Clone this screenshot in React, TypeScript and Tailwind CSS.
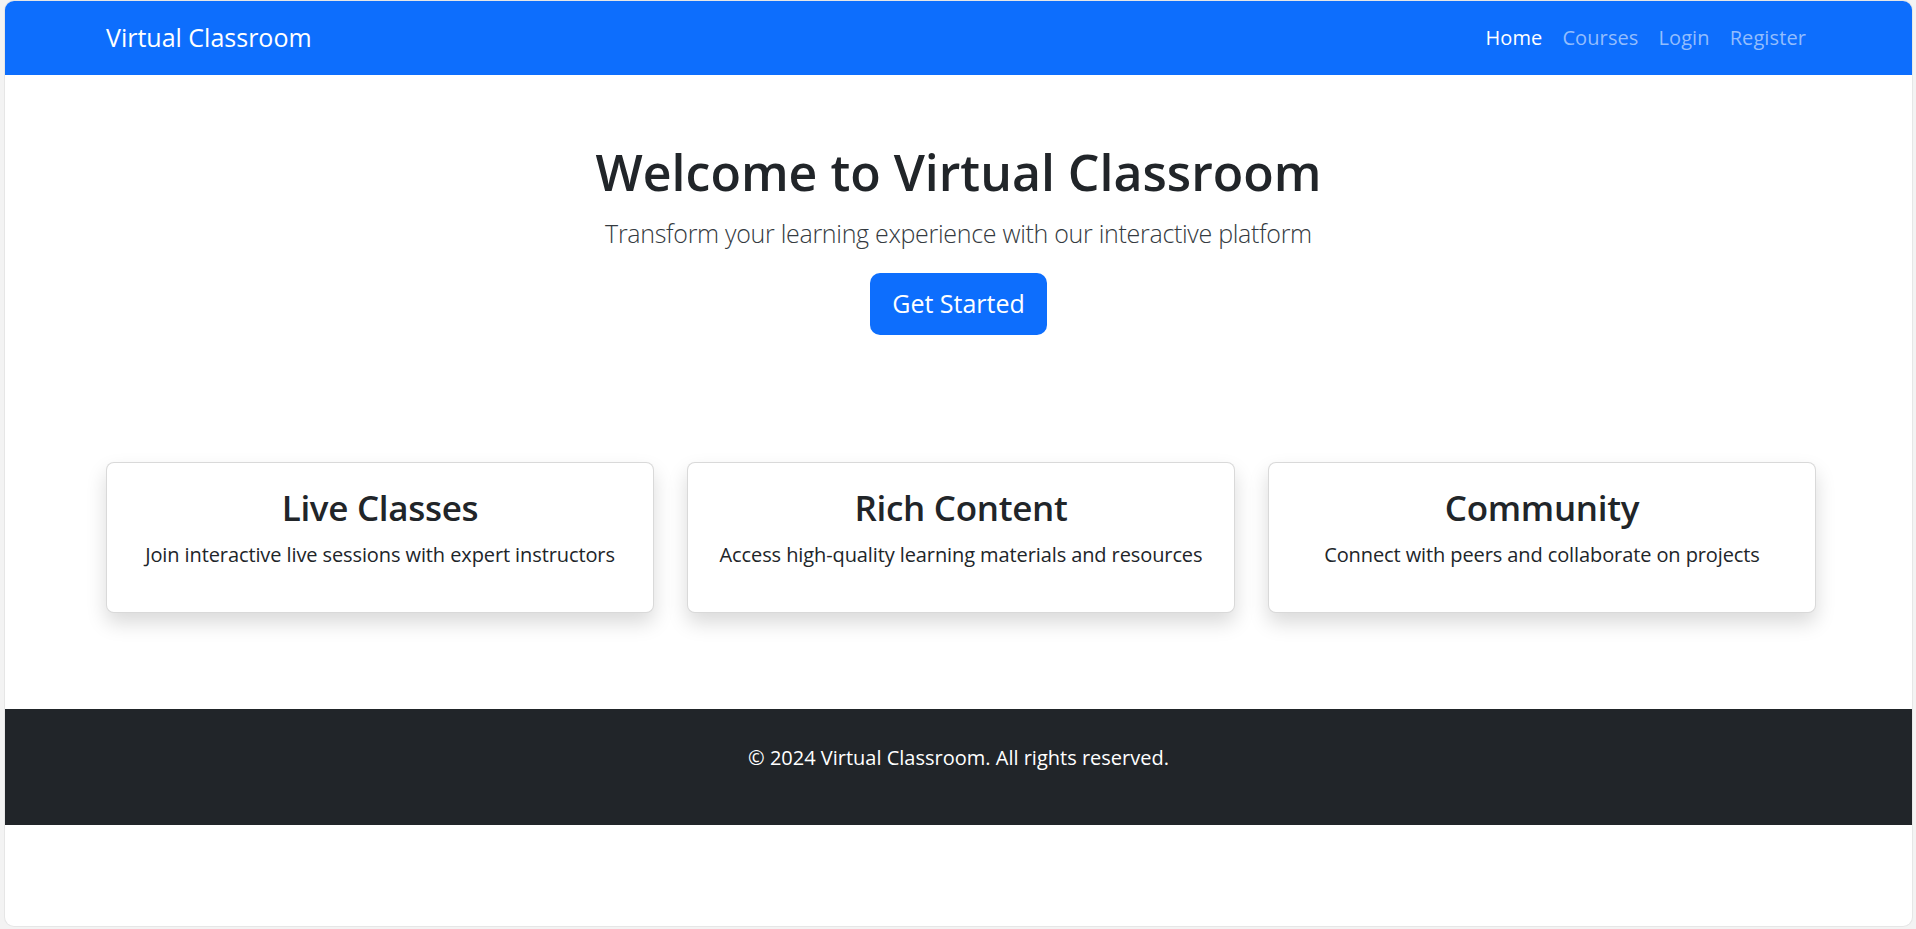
const links = [
  { label: "Home", active: true },
  { label: "Courses", active: false },
  { label: "Login", active: false },
  { label: "Register", active: false },
]

const features = [
  { title: "Live Classes", text: "Join interactive live sessions with expert instructors" },
  { title: "Rich Content", text: "Access high-quality learning materials and resources" },
  { title: "Community", text: "Connect with peers and collaborate on projects" },
]

export default function App() {
  return (
    <div className="h-[929px] bg-[#f3f3f3] pl-[5px] pr-[4px] pt-[1px] pb-[3px] font-['Open_Sans',sans-serif] text-[#212529]">
      <div className="flex h-full flex-col overflow-hidden rounded-[9px] bg-white shadow-[0_0_0_1px_#e6e6e6]">
        {/* Navbar */}
        <nav className="h-[74px] shrink-0 bg-[#0d6efd]">
          <div className="ml-[101px] flex h-full w-[1710px] items-center justify-between">
            <span className="text-[25px] text-white">Virtual Classroom</span>
            <ul className="flex items-center">
              {links.map((l) => (
                <li key={l.label}>
                  <a
                    href="#"
                    className={
                      "block px-[10px] text-[20px] tracking-[0.1px] " +
                      (l.active ? "text-white" : "text-[#93bdfd]")
                    }
                  >
                    {l.label}
                  </a>
                </li>
              ))}
            </ul>
          </div>
        </nav>

        {/* Hero */}
        <section className="flex flex-col items-center pt-[67px] text-center">
          <h1 className="text-[50px] leading-[60px] font-semibold">
            Welcome to Virtual Classroom
          </h1>
          <p className="mt-[13px] text-[25px] leading-[37px] font-light tracking-[-0.3px] text-[#343a40]">
            Transform your learning experience with our interactive platform
          </p>
          <button className="mt-[21px] h-[62px] rounded-[10px] bg-[#0d6efd] px-[22px] text-[25px] text-white">
            Get Started
          </button>
        </section>

        {/* Features */}
        <section className="ml-[101px] mt-[127px] grid w-[1710px] grid-cols-3 gap-[33px]">
          {features.map((f) => (
            <div
              key={f.title}
              className="h-[151px] rounded-[8px] border border-black/15 bg-white px-[20px] pt-[24px] text-center shadow-[0_10px_20px_rgba(0,0,0,0.15)]"
            >
              <h3 className="text-[35px] leading-[42px] font-semibold tracking-[-0.3px]">{f.title}</h3>
              <p className="mt-[11px] text-[20px] leading-[30px] tracking-[-0.1px]">{f.text}</p>
            </div>
          ))}
        </section>

        {/* Footer */}
        <footer className="mt-[96px] h-[116px] shrink-0 bg-[#212529] pt-[34px] text-center">
          <p className="text-[20px] leading-[30px] text-white">
            © 2024 Virtual Classroom. All rights reserved.
          </p>
        </footer>
      </div>
    </div>
  )
}
